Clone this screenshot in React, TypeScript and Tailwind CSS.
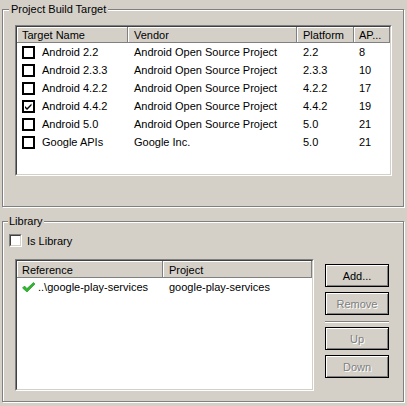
import React from "react";

const rows = [
  { name: "Android 2.2", vendor: "Android Open Source Project", platform: "2.2", api: "8", checked: false },
  { name: "Android 2.3.3", vendor: "Android Open Source Project", platform: "2.3.3", api: "10", checked: false },
  { name: "Android 4.2.2", vendor: "Android Open Source Project", platform: "4.2.2", api: "17", checked: false },
  { name: "Android 4.4.2", vendor: "Android Open Source Project", platform: "4.4.2", api: "19", checked: true },
  { name: "Android 5.0", vendor: "Android Open Source Project", platform: "5.0", api: "21", checked: false },
  { name: "Google APIs", vendor: "Google Inc.", platform: "5.0", api: "21", checked: false },
];

function TableCheck({ checked }: { checked: boolean }) {
  return (
    <div className="w-[13px] h-[13px] border-2 border-black bg-white flex items-center justify-center shrink-0">
      {checked && (
        <svg width="9" height="9" viewBox="0 0 9 9">
          <path d="M1 4 L3 6 L7.5 1.5 L7.5 3.5 L3 8 L1 6 Z" fill="#000" />
        </svg>
      )}
    </div>
  );
}

function HeaderCell({ children }: { children: React.ReactNode }) {
  return (
    <div className="h-full flex items-center pl-[5px] pt-[2px] border-r border-b border-[#808080] shadow-[inset_1px_1px_0_#fff] bg-[#d4d0c8] overflow-hidden whitespace-nowrap">
      {children}
    </div>
  );
}

function Sunken({ className, children }: { className: string; children: React.ReactNode }) {
  return (
    <div className={`border border-t-[#808080] border-l-[#808080] border-r-white border-b-white ${className}`}>
      <div className="w-full h-full border border-t-[#404040] border-l-[#404040] border-r-[#d4d0c8] border-b-[#d4d0c8] bg-white overflow-hidden">
        {children}
      </div>
    </div>
  );
}

function Btn({ label, disabled }: { label: string; disabled?: boolean }) {
  return (
    <div
      className={`w-[64px] h-[23px] border border-black bg-[#d4d0c8] shadow-[inset_1px_1px_0_#fff,inset_-1px_-1px_0_#808080] flex items-center justify-center pt-[1px] ${
        disabled ? "text-[#808080] [text-shadow:1px_1px_0_#fff]" : "text-black"
      }`}
    >
      {label}
    </div>
  );
}

export default function App() {
  return (
    <div
      className="w-[407px] h-[406px] bg-[#d4d0c8] text-black text-[11px] leading-none pt-[9px] pl-[2px] overflow-hidden"
      style={{ fontFamily: '"Liberation Sans", Arial, sans-serif' }}
    >
      {/* Group 1 */}
      <div className="relative w-[402px] h-[198px] border border-[#808080] shadow-[inset_1px_1px_0_#fff,1px_1px_0_#fff] pl-[12px] pt-[15px]">
        <span className="absolute left-[6px] top-[-7px] bg-[#d4d0c8] px-[2px] leading-[13px]">Project Build Target</span>
        <Sunken className="w-[377px] h-[151px]">
          <div className="grid grid-cols-[111px_169px_57px_36px] h-[16px]">
            <HeaderCell>Target Name</HeaderCell>
            <HeaderCell>
              <span className="pl-[1px]">Vendor</span>
            </HeaderCell>
            <HeaderCell>
              <span className="pl-[1px]">Platform</span>
            </HeaderCell>
            <HeaderCell>AP...</HeaderCell>
          </div>
          {rows.map((r) => (
            <div key={r.name} className="grid grid-cols-[111px_169px_57px_36px] h-[18px] items-center whitespace-nowrap">
              <div className="flex items-center pl-[5px] gap-[7px]">
                <TableCheck checked={r.checked} />
                <span className="pt-[1px]">{r.name}</span>
              </div>
              <div className="pl-[6px] pt-[1px]">{r.vendor}</div>
              <div className="pl-[6px] pt-[1px]">{r.platform}</div>
              <div className="pl-[5px] pt-[1px]">{r.api}</div>
            </div>
          ))}
        </Sunken>
      </div>

      {/* Group 2 */}
      <div className="relative mt-[14px] w-[402px] h-[181px] border border-[#808080] shadow-[inset_1px_1px_0_#fff,1px_1px_0_#fff] pl-[6px] pt-[12px]">
        <span className="absolute left-[5px] top-[-7px] bg-[#d4d0c8] px-[1px] leading-[13px]">Library</span>
        <div className="flex items-center gap-[5px] h-[13px]">
          <div className="w-[13px] h-[13px] border border-t-[#808080] border-l-[#808080] border-r-white border-b-white">
            <div className="w-full h-full border border-t-[#404040] border-l-[#404040] border-r-[#d4d0c8] border-b-[#d4d0c8] bg-white" />
          </div>
          <span className="pt-[1px]">Is Library</span>
        </div>
        <div className="flex mt-[12px] ml-[6px]">
          <Sunken className="w-[299px] h-[132px]">
            <div className="grid grid-cols-[146px_149px] h-[17px]">
              <HeaderCell>Reference</HeaderCell>
              <HeaderCell>
                <span className="pl-[1px]">Project</span>
              </HeaderCell>
            </div>
            <div className="grid grid-cols-[146px_149px] h-[18px] items-center whitespace-nowrap">
              <div className="flex items-center pl-[5px] gap-[2px]">
                <svg width="14" height="11" viewBox="0 0 14 11" className="shrink-0">
                  <path d="M0.5 6 L2.5 4 L5 6.5 L11.5 0.5 L13 2 L5 10 Z" fill="#2fb62f" stroke="#1e8a1e" strokeWidth="0.6" />
                </svg>
                <span className="pt-[1px]">..\google-play-services</span>
              </div>
              <div className="pl-[6px] pt-[1px]">google-play-services</div>
            </div>
          </Sunken>
          <div className="flex flex-col ml-[11px] mt-[5px]">
            <Btn label="Add..." />
            <div className="mt-[5px]">
              <Btn label="Remove" disabled />
            </div>
            <div className="mt-[6px] w-[64px] h-[2px] border-t border-t-[#808080] border-b border-b-white" />
            <div className="mt-[4px]">
              <Btn label="Up" disabled />
            </div>
            <div className="mt-[5px]">
              <Btn label="Down" disabled />
            </div>
          </div>
        </div>
      </div>
    </div>
  );
}
